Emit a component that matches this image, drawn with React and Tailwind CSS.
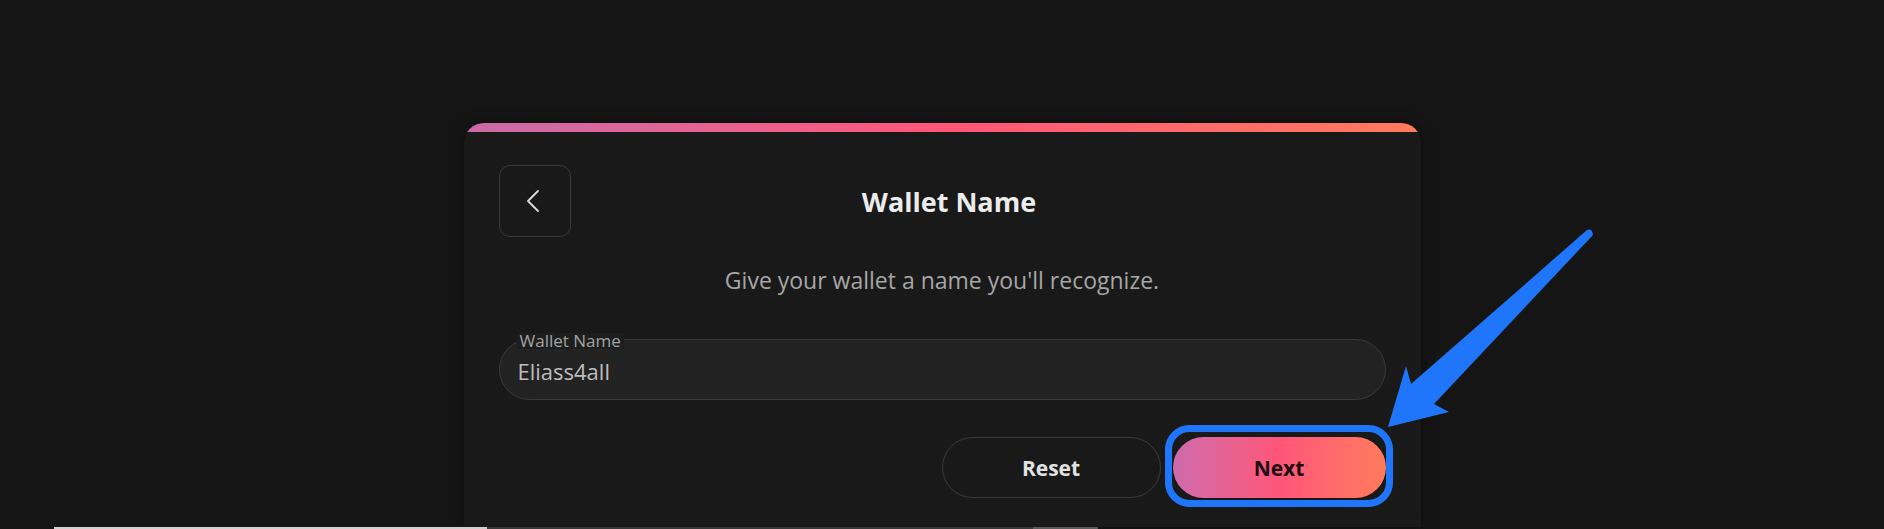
import { useState } from 'react'

const FONT = { fontFamily: '"Open Sans", "Noto Sans", sans-serif' }

function BackButton() {
  return (
    <button className="w-[72px] h-[72px] shrink-0 rounded-[11px] border border-[#3a3a3a] flex items-center justify-center">
      <svg className="mr-[4px]" width="14" height="24" viewBox="0 0 14 24" fill="none">
        <path d="M12 2 L2 12 L12 22" stroke="#dcdcdc" strokeWidth="1.8" strokeLinecap="round" strokeLinejoin="round" />
      </svg>
    </button>
  )
}

function Annotation() {
  return (
    <svg className="absolute inset-0 pointer-events-none" width="1884" height="529" viewBox="0 0 1884 529">
      <rect x="1168.5" y="428.5" width="221" height="75" rx="21" fill="none" stroke="#1f76fb" strokeWidth="7" />
      <path
        d="M1388 427 L1406 366 L1411 384 L1587 230 Q1592 228 1593 235 L1434 404 L1449 412 Z"
        fill="#1f76fb"
      />
    </svg>
  )
}

export default function App() {
  const [name, setName] = useState('Eliass4all')

  return (
    <div className="relative h-[529px] overflow-hidden bg-[#151515] flex flex-col" style={FONT}>
      <div className="flex-1 min-h-0 pt-[123px]">
        <div className="w-[957px] h-full mx-auto rounded-t-[20px] overflow-hidden bg-[#191919] shadow-[0_0_14px_rgba(0,0,0,0.45)] flex flex-col">
          <div className="h-[9px] shrink-0 bg-linear-to-r from-[#c96aa8] via-[#ff5578] to-[#ff7a5c]" />

          <div className="px-[35px] pt-[33px] flex flex-col">
            {/* Header */}
            <div className="flex items-center">
              <BackButton />
              <h1 className="flex-1 text-center pl-[2px] pr-[60px] text-[27px] font-bold text-[#ececec] leading-none">
                Wallet Name
              </h1>
            </div>

            <p className="mt-[29px] text-center text-[23px] leading-[28px] text-[#a6a6a6]">
              Give your wallet a name you'll recognize.
            </p>

            {/* Input */}
            <div className="relative mt-[45px] h-[61px] rounded-full border border-[#3a3a3a] bg-[#222222]">
              <span className="absolute left-[17px] -top-[7px] px-[3px] bg-[#1d1d1d] text-[17px] leading-[16px] text-[#a3a3a3]">
                Wallet Name
              </span>
              <input
                value={name}
                onChange={e => setName(e.target.value)}
                className="w-full h-full bg-transparent pl-[18px] pt-[3px] text-[22px] text-[#bdbdbd] outline-none"
              />
            </div>

            {/* Actions */}
            <div className="mt-[37px] flex justify-end gap-[12px]">
              <button className="w-[219px] h-[61px] pt-[2px] rounded-full border border-[#3a3a3a] text-[21px] font-bold text-[#e2e2e2]">
                Reset
              </button>
              <button className="w-[213px] h-[61px] pt-[2px] rounded-full bg-linear-to-r from-[#cd6aab] via-[#ff5578] to-[#ff7b5c] text-[21px] font-bold text-[#1c0d12]">
                Next
              </button>
            </div>
          </div>
        </div>
      </div>

      <div className="h-[2px] shrink-0 flex">
        <div className="w-[54px]" />
        <div className="w-[433px] bg-[#cfcfcf]" />
        <div className="w-[546px] bg-[#383838]" />
        <div className="w-[65px] bg-[#5a5a5a]" />
      </div>

      <Annotation />
    </div>
  )
}
